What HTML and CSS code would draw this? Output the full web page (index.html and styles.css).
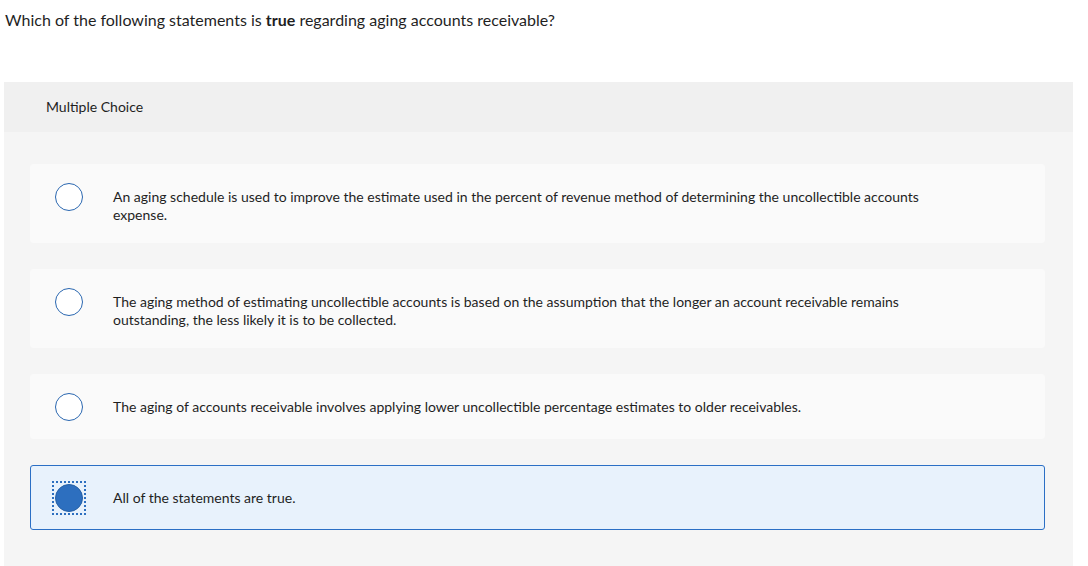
FILE: index.html
```html
<!DOCTYPE html>
<html lang="en">
<head>
<meta charset="utf-8">
<title>Multiple Choice</title>
<link rel="stylesheet" href="styles.css">
</head>
<body>
<p class="question">Which of the following statements is <strong>true</strong> regarding aging accounts receivable?</p>
<section class="panel">
  <header class="panel-head">Multiple Choice</header>
  <div class="choices">
    <div class="choice">
      <span class="radio-wrap"><span class="radio"></span></span>
      <span class="choice-text">An aging schedule is used to improve the estimate used in the percent of revenue method of determining the uncollectible accounts expense.</span>
    </div>
    <div class="choice">
      <span class="radio-wrap"><span class="radio"></span></span>
      <span class="choice-text">The aging method of estimating uncollectible accounts is based on the assumption that the longer an account receivable remains outstanding, the less likely it is to be collected.</span>
    </div>
    <div class="choice">
      <span class="radio-wrap"><span class="radio"></span></span>
      <span class="choice-text">The aging of accounts receivable involves applying lower uncollectible percentage estimates to older receivables.</span>
    </div>
    <div class="choice selected">
      <span class="radio-wrap focused"><span class="radio checked"></span></span>
      <span class="choice-text">All of the statements are true.</span>
    </div>
  </div>
</section>
</body>
</html>
```
FILE: styles.css
```css
html, body {
  margin: 0;
  padding: 0;
  background: #ffffff;
}
body {
  font-family: Lato, "Liberation Sans", sans-serif;
  color: #1f1f1f;
  padding: 0 15px 0 4px;
}
.question {
  margin: 0;
  padding: 10px 0 0 1px;
  font-size: 16px;
  line-height: 20px;
  height: 72px;
}
.question strong {
  font-weight: 700;
}
.panel {
  background: #f5f5f5;
  padding-bottom: 60px;
}
.panel-head {
  background: #f0f0f0;
  height: 50px;
  padding-left: 42px;
  font-size: 14px;
  line-height: 50px;
}
.choices {
  display: flex;
  flex-direction: column;
  gap: 26px;
  padding: 32px 28px 0 26px;
}
.choice {
  display: flex;
  align-items: flex-start;
  background: #fafafa;
  border: 1px solid #fafafa;
  border-radius: 3px;
  padding: 18px 84px 17px 21px;
}
.choice.selected {
  background: #e8f2fc;
  border-color: #2b6fc5;
}
.radio-wrap {
  flex: none;
  box-sizing: border-box;
  width: 34px;
  height: 34px;
  padding: 3px;
  border: 2px dotted transparent;
  margin: -3px 0;
}
.radio-wrap.focused {
  border-color: #2d6fbf;
}
.radio {
  display: block;
  box-sizing: border-box;
  width: 28px;
  height: 28px;
  margin: -2px 0 0 -2px;
  border: 1.5px solid #2a67b0;
  border-radius: 50%;
  background: #ffffff;
}
.radio.checked {
  background: #2d6fbf;
  border-color: #2560a6;
}
.choice-text {
  padding: 5px 0 1px 27px;
  font-size: 14px;
  line-height: 18px;
}
```
